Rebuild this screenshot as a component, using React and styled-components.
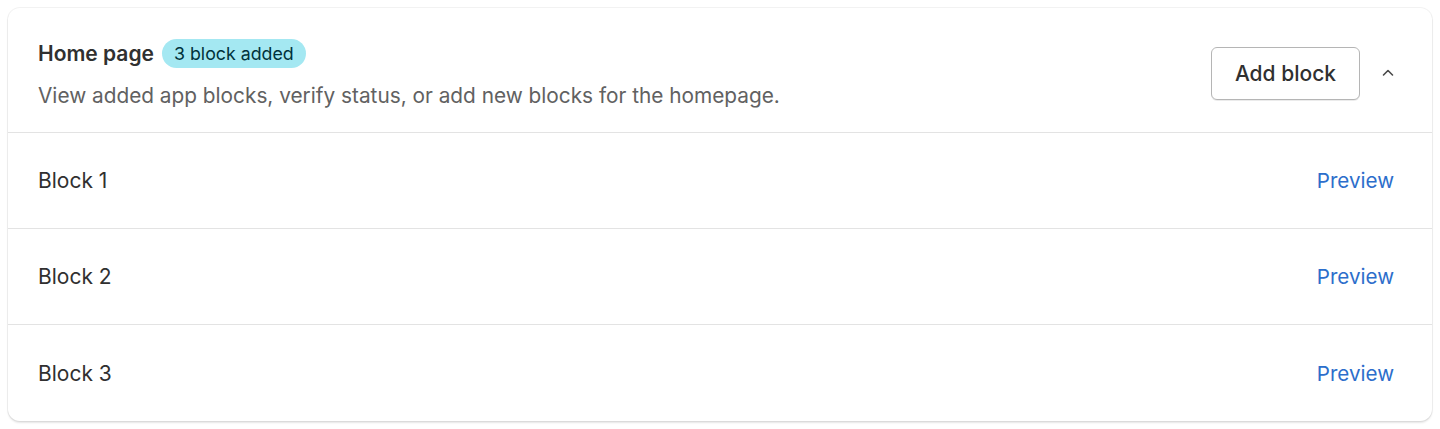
import React, { useState } from 'react';
import styled, { createGlobalStyle } from 'styled-components';

const GlobalStyle = createGlobalStyle`
  * { box-sizing: border-box; }
  body {
    margin: 0;
    background: #ffffff;
    font-family: Inter, "Noto Sans", "Liberation Sans", sans-serif;
    color: #303030;
  }
`;

const Page = styled.div`
  padding: 8px;
`;

const Card = styled.section`
  background: #fff;
  border-radius: 12px;
  box-shadow: 0 0 0 1px rgba(0, 0, 0, 0.05), 0 2px 2px rgba(0, 0, 0, 0.1);
  overflow: hidden;
`;

const Header = styled.header`
  display: flex;
  align-items: center;
  justify-content: space-between;
  height: 125px;
  padding: 0 30px;
  border-bottom: 1px solid #e3e3e3;
`;

const HeadingGroup = styled.div`
  display: flex;
  flex-direction: column;
  gap: 13px;
  padding-top: 9px;
`;

const TitleRow = styled.div`
  display: flex;
  align-items: center;
  gap: 8px;
  height: 29px;
`;

const Title = styled.h2`
  margin: 0;
  font-size: 21px;
  font-weight: 600;
  color: #303030;
`;

const Badge = styled.span`
  display: inline-flex;
  align-items: center;
  height: 29px;
  padding: 0 12px;
  border-radius: 15px;
  background: #a4e8f2;
  color: #00323b;
  font-size: 17.8px;
  font-weight: 400;
`;

const Subtitle = styled.p`
  margin: 0;
  line-height: 30px;
  font-size: 20.8px;
  color: #616161;
`;

const Actions = styled.div`
  display: flex;
  align-items: center;
  gap: 14px;
  padding-top: 6px;
`;

const Button = styled.button`
  height: 53px;
  padding: 0 23px;
  border: 1px solid #b5b5b5;
  border-radius: 6px;
  background: #fff;
  box-shadow: 0 1px 0 rgba(0, 0, 0, 0.08);
  font-family: inherit;
  font-size: 21px;
  font-weight: 500;
  color: #303030;
  cursor: pointer;
`;

const Toggle = styled.button`
  width: 28px;
  height: 28px;
  display: flex;
  align-items: center;
  justify-content: center;
  border: none;
  background: none;
  color: #4a4a4a;
  cursor: pointer;
  padding: 0;
  transform: rotate(${(p) => (p.$open ? 0 : 180)}deg);
`;

const Row = styled.div`
  display: flex;
  align-items: center;
  justify-content: space-between;
  height: 96px;
  padding: 0 38px 0 30px;
  border-bottom: 1px solid #e3e3e3;

  &:last-child {
    border-bottom: none;
  }
`;

const RowLabel = styled.span`
  font-size: 21px;
  color: #303030;
`;

const Link = styled.a`
  font-size: 20.6px;
  color: #2c6ecb;
  text-decoration: none;
  cursor: pointer;
`;

const blocks = ['Block 1', 'Block 2', 'Block 3'];

const App = () => {
  const [open, setOpen] = useState(true);

  return (
    <Page>
      <GlobalStyle />
      <Card>
        <Header>
          <HeadingGroup>
            <TitleRow>
              <Title>Home page</Title>
              <Badge>{blocks.length} block added</Badge>
            </TitleRow>
            <Subtitle>View added app blocks, verify status, or add new blocks for the homepage.</Subtitle>
          </HeadingGroup>
          <Actions>
            <Button>Add block</Button>
            <Toggle $open={open} onClick={() => setOpen(!open)} aria-label="Collapse">
              <svg width="16" height="16" viewBox="0 0 16 16" fill="none">
                <path d="M3.5 10 8 5.5l4.5 4.5" stroke="currentColor" strokeWidth="1.6" strokeLinecap="round" strokeLinejoin="round" />
              </svg>
            </Toggle>
          </Actions>
        </Header>
        {open && blocks.map((name) => (
          <Row key={name}>
            <RowLabel>{name}</RowLabel>
            <Link>Preview</Link>
          </Row>
        ))}
      </Card>
    </Page>
  );
};

export default App;
